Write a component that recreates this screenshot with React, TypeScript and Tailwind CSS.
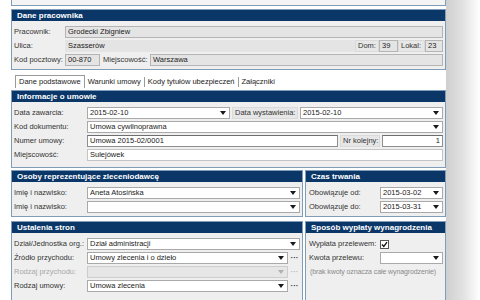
import React from 'react';

const font = { fontFamily: '"Liberation Sans", Arial, sans-serif' };

const Arrow: React.FC<{ disabled?: boolean }> = ({ disabled }) => (
  <svg width="6" height="4" viewBox="0 0 6 4" className="shrink-0">
    <path d="M0 0 L6 0 L3 4 Z" fill={disabled ? '#b0b0b0' : '#1a1a1a'} />
  </svg>
);

const Panel: React.FC<{ title: string; children: React.ReactNode; className?: string }> = ({ title, children, className }) => (
  <div className={`border border-[#7f9db9] bg-[#efefef] flex flex-col ${className ?? ''}`}>
    <div className="h-[11px] bg-[#0a3668] text-white font-bold text-[8px] leading-[11px] px-[5px] whitespace-nowrap">{title}</div>
    <div className="flex flex-col gap-[2px] pt-[5px] pb-[3px] pl-[2px] pr-[2px] flex-1">{children}</div>
  </div>
);

const Row: React.FC<{ children: React.ReactNode }> = ({ children }) => (
  <div className="flex items-center h-[12px]">{children}</div>
);

const Label: React.FC<{ w: string; children: React.ReactNode; disabled?: boolean }> = ({ w, children, disabled }) => (
  <div className={`${w} shrink-0 whitespace-nowrap ${disabled ? 'text-[#a8a8a8]' : 'text-[#333]'}`}>{children}</div>
);

const BoxLabel: React.FC<{ w: string; children: React.ReactNode }> = ({ w, children }) => (
  <div className={`${w} shrink-0 h-[12px] bg-[#e7e7e7] border border-[#dadada] px-[2px] leading-[10px] whitespace-nowrap text-[#333]`}>{children}</div>
);

const ReadField: React.FC<{ className?: string; children?: React.ReactNode }> = ({ className, children }) => (
  <div className={`h-[12px] bg-[#e4e4e4] border border-[#b4b4b4] px-[2px] leading-[10px] whitespace-nowrap overflow-hidden text-[#222] ${className ?? ''}`}>{children}</div>
);

const Input: React.FC<{ className?: string; children?: React.ReactNode }> = ({ className, children }) => (
  <div className={`h-[12px] bg-white border border-[#8f8f8f] border-t-[#6e6e6e] px-[2px] leading-[10px] whitespace-nowrap overflow-hidden text-[#222] ${className ?? ''}`}>{children}</div>
);

const Select: React.FC<{ className?: string; children?: React.ReactNode; disabled?: boolean }> = ({ className, children, disabled }) => (
  <div className={`h-[12px] border flex items-center justify-between pl-[2px] pr-[3px] whitespace-nowrap overflow-hidden text-[#222] ${disabled ? 'bg-[#e6e6e6] border-[#cdcdcd]' : 'bg-white border-[#a9a9a9]'} ${className ?? ''}`}>
    <span className="leading-[10px]">{children}</span>
    <Arrow disabled={disabled} />
  </div>
);

const Dots: React.FC<{ disabled?: boolean }> = ({ disabled }) => (
  <div className={`w-[11px] h-[12px] ml-[1px] shrink-0 flex items-center justify-center text-[8px] leading-none font-bold ${disabled ? 'text-[#bbb]' : 'text-[#333]'}`}>···</div>
);

export default function App() {
  return (
    <div className="w-[480px] h-[300px] overflow-hidden bg-white flex text-[7.5px]" style={font}>
      <div className="w-[11px] shrink-0" />
      <div className="w-[435px] shrink-0 flex flex-col">
        <div className="h-[6px] shrink-0 border-x border-b border-[#7f9db9] bg-[#f4f4f4]" />
        <div className="h-[3px] shrink-0" />
        <Panel title="Dane pracownika">
          <Row>
            <Label w="w-[51px]">Pracownik:</Label>
            <ReadField className="flex-1">Grodecki Zbigniew</ReadField>
          </Row>
          <Row>
            <Label w="w-[51px]">Ulica:</Label>
            <ReadField className="flex-1 border-[#e4e4e4]">Szasserów</ReadField>
            <BoxLabel w="w-[24px]">Dom:</BoxLabel>
            <ReadField className="w-[19px] shrink-0">39</ReadField>
            <BoxLabel w="w-[27px]">Lokal:</BoxLabel>
            <ReadField className="w-[18px] shrink-0">23</ReadField>
          </Row>
          <Row>
            <Label w="w-[51px]">Kod pocztowy:</Label>
            <ReadField className="w-[35px] shrink-0">00-870</ReadField>
            <div className="w-[50px] shrink-0 pl-[3px] text-[#333] whitespace-nowrap">Miejscowość:</div>
            <ReadField className="flex-1">Warszawa</ReadField>
          </Row>
        </Panel>
        <div className="h-[4px] shrink-0" />
        <div className="h-[14px] shrink-0 flex items-end pl-[4px] text-[#222]">
          <div className="h-[13px] px-[3px] border border-b-0 border-[#9a9a9a] bg-white leading-[12px] whitespace-nowrap">Dane podstawowe</div>
          <div className="h-[10px] mb-[1px] px-[3px] leading-[10px] border-r border-[#9a9a9a] whitespace-nowrap">Warunki umowy</div>
          <div className="h-[10px] mb-[1px] px-[3px] leading-[10px] border-r border-[#9a9a9a] whitespace-nowrap">Kody tytułów ubezpieczeń</div>
          <div className="h-[10px] mb-[1px] px-[3px] leading-[10px] whitespace-nowrap">Załączniki</div>
        </div>
        <div className="h-[2px] shrink-0" />
        <Panel title="Informacje o umowie" className="[&>div:last-child]:pb-[6px]">
          <Row>
            <Label w="w-[73px]">Data zawarcia:</Label>
            <Select className="w-[143px] shrink-0">2015-02-10</Select>
            <div className="w-[2px] shrink-0" />
            <BoxLabel w="w-[66px]">Data wystawienia:</BoxLabel>
            <div className="w-[2px] shrink-0" />
            <Select className="flex-1">2015-02-10</Select>
          </Row>
          <Row>
            <Label w="w-[73px]">Kod dokumentu:</Label>
            <Select className="flex-1">Umowa cywilnoprawna</Select>
          </Row>
          <Row>
            <Label w="w-[73px]">Numer umowy:</Label>
            <Input className="w-[251px] shrink-0">Umowa 2015-02/0001</Input>
            <div className="w-[2px] shrink-0" />
            <BoxLabel w="w-[40px]">Nr kolejny:</BoxLabel>
            <div className="w-[2px] shrink-0" />
            <Input className="flex-1 text-right">1</Input>
          </Row>
          <Row>
            <Label w="w-[73px]">Miejscowość:</Label>
            <Input className="flex-1 border-[#c4c4c4] border-t-[#c4c4c4]">Sulejówek</Input>
          </Row>
        </Panel>
        <div className="h-[2px] shrink-0" />
        <div className="grid grid-cols-[292px_141px] gap-x-[2px] gap-y-[4px]">
          <Panel title="Osoby reprezentujące zleceniodawcę">
            <Row>
              <Label w="w-[73px]">Imię i nazwisko:</Label>
              <Select className="flex-1">Aneta Atosińska</Select>
            </Row>
            <Row>
              <Label w="w-[73px]">Imię i nazwisko:</Label>
              <Select className="flex-1" />
            </Row>
          </Panel>
          <Panel title="Czas trwania">
            <Row>
              <Label w="w-[72px] pl-[1px]">Obowiązuje od:</Label>
              <Select className="flex-1 border-[#8f8f8f]">2015-03-02</Select>
            </Row>
            <Row>
              <Label w="w-[72px] pl-[1px]">Obowiązuje do:</Label>
              <Select className="flex-1 border-[#8f8f8f]">2015-03-31</Select>
            </Row>
          </Panel>
          <Panel title="Ustalenia stron" className="h-[90px]">
            <Row>
              <Label w="w-[73px]">Dział/Jednostka org.:</Label>
              <Select className="flex-1">Dział administracji</Select>
            </Row>
            <Row>
              <Label w="w-[73px]">Źródło przychodu:</Label>
              <Select className="flex-1 border-[#7a7a7a]">Umowy zlecenia i o dzieło</Select>
              <Dots />
            </Row>
            <Row>
              <Label w="w-[73px]" disabled>Rodzaj przychodu:</Label>
              <Select className="flex-1" disabled />
              <Dots disabled />
            </Row>
            <Row>
              <Label w="w-[73px]">Rodzaj umowy:</Label>
              <Select className="flex-1">Umowa zlecenia</Select>
              <Dots />
            </Row>
          </Panel>
          <Panel title="Sposób wypłaty wynagrodzenia" className="h-[90px]">
            <Row>
              <Label w="w-[72px] pl-[1px]">Wypłata przelewem:</Label>
              <div className="w-[9px] h-[9px] border border-[#555] bg-white flex items-center justify-center">
                <svg width="7" height="7" viewBox="0 0 7 7">
                  <path d="M1 3.5 L2.8 5.5 L6 1.2" stroke="#111" strokeWidth="1.3" fill="none" />
                </svg>
              </div>
            </Row>
            <Row>
              <Label w="w-[72px] pl-[1px]">Kwota przelewu:</Label>
              <Select className="flex-1" />
            </Row>
            <Row>
              <div className="pl-[2px] text-[#8a8a8a] text-[7px] tracking-[-0.1px] whitespace-nowrap">(brak kwoty oznacza całe wynagrodzenie)</div>
            </Row>
          </Panel>
        </div>
      </div>
      <div className="flex-1 bg-gradient-to-r from-[#cfcfcf] via-[#e2e2e2] to-white" />
    </div>
  );
}
